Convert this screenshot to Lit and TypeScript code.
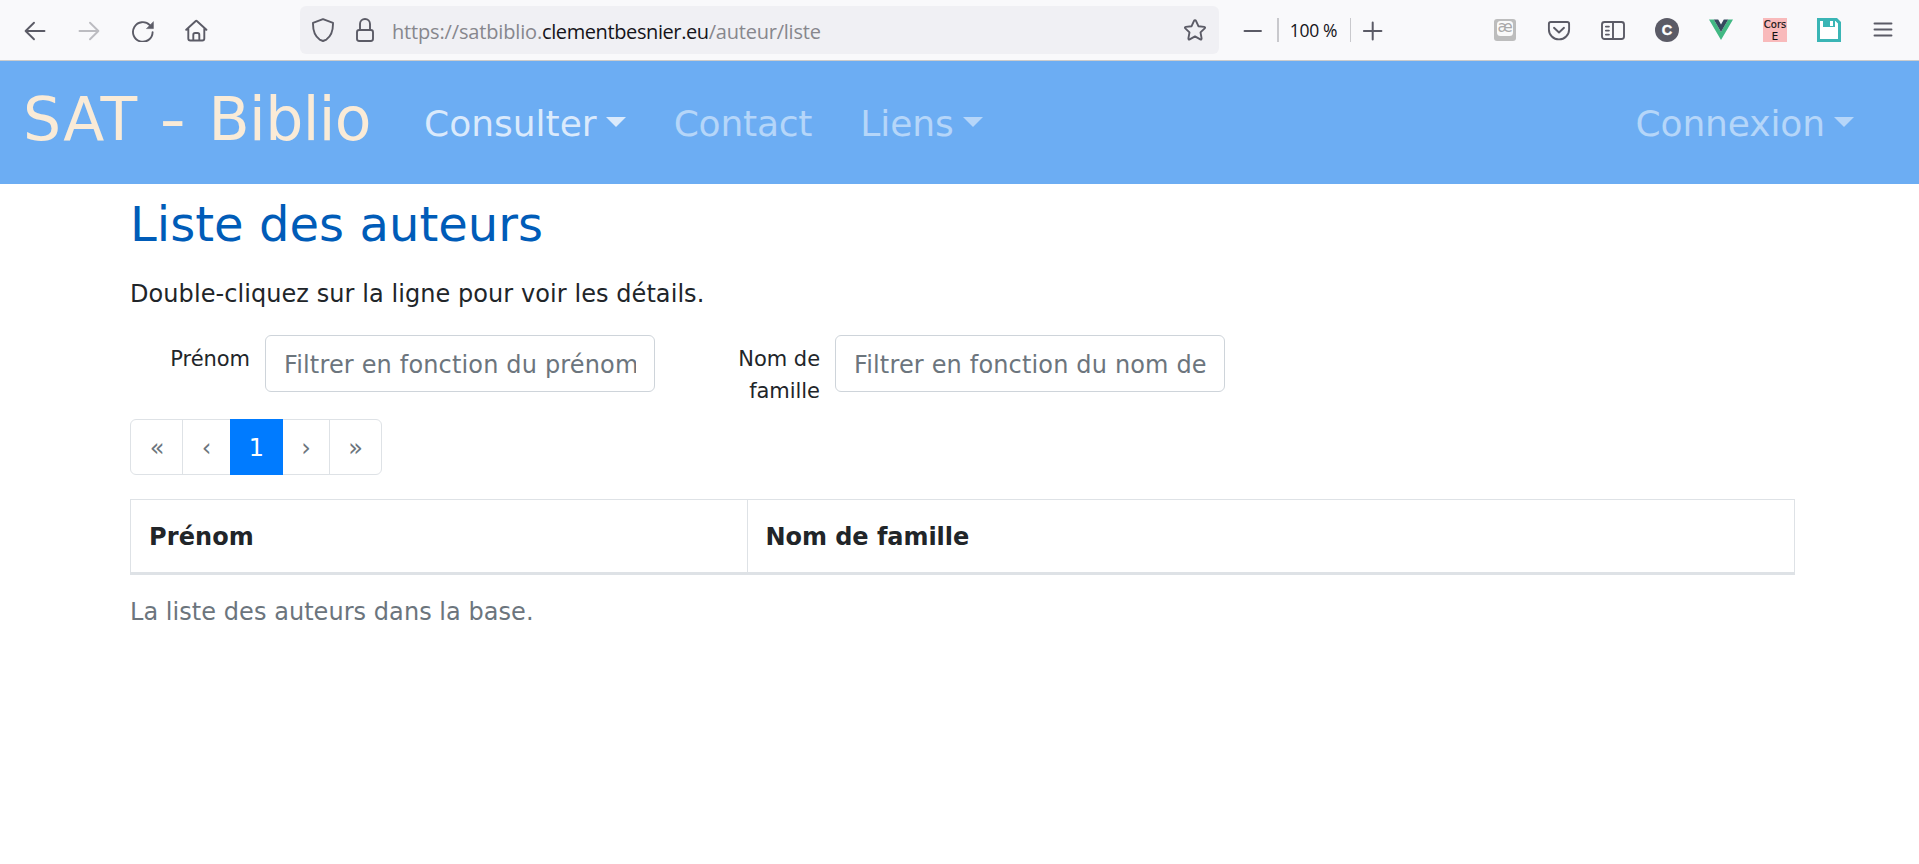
import { LitElement, html, css, svg } from "lit";
import { customElement, property } from "lit/decorators.js";
import { classMap } from "lit/directives/class-map.js";

const icon = (body: unknown, label: string) => html`
  <svg class="icon" viewBox="0 0 24 24" width="24" height="24" fill="none" stroke="#5b5b66"
    stroke-width="1.9" stroke-linecap="round" stroke-linejoin="round" aria-label=${label}>${body}</svg>`;

const icons = {
  back: svg`<path d="M21.5 13H2.6M11 4.7L2.6 13l8.4 8.3"/>`,
  forward: svg`<g stroke="#bcbcc1"><path d="M2.5 13h18.9M13 4.7l8.4 8.3L13 21.3"/></g>`,
  reload: svg`<path d="M21.6 14.2A9.8 9.8 0 1 1 18.8 7.1"/><path d="M22.4 4v6.6h-6.6z" fill="#5b5b66" stroke-width="0.6"/>`,
  home: svg`<path d="M1.2 11.8L10.500 3.200q.8-.7 1.600 0l9.300 8.600M3.300 10.300v10.200q0 2 2 2h12q2 0 2-2V10.300M8.300 22.300v-5.500q0-1.800 1.800-1.800h2.400q1.800 0 1.800 1.800v5.500"/>`,
  shield: svg`<path d="M12 1.100L22 4.900q.3 11.800-6.600 16.700L12 23l-3.400-1.400Q1.700 16.700 2 4.900z"/>`,
  lock: svg`<rect x="4" y="12" width="16" height="11" rx="2.200"/><path d="M7 12V6a5 5 0 0 1 10 0v6"/>`,
  star: svg`<path d="M12 2.200q.7 0 1 .7l2.400 5.300 5.800.7q1.500.3.5 1.500l-4.200 4 1.100 6q.1 1.500-1.300.9L12 18.400l-5.300 2.900q-1.400.6-1.300-.9l1.100-6-4.200-4q-1-1.200.5-1.500l5.800-.7L11 2.900q.3-.7 1-.7z"/>`,
  minus: svg`<path d="M3.500 13h16.500"/>`,
  plus: svg`<path d="M2.900 13h17.500M11.700 4.600v16.800" stroke-width="2"/>`,
  key: svg`<rect x="1" y="1" width="22" height="22" rx="3" fill="#bdbdbd" stroke="none"/>
    <rect x="4" y="3" width="16" height="15" rx="3.500" fill="#fafafa" stroke="none"/>
    <text x="12" y="13.500" text-anchor="middle" class="key-text">æ</text>`,
  pocket: svg`<path d="M3.800 4h16.400q1.900 0 1.900 1.900V11.500a10.100 9.900 0 0 1-20.200 0V5.900Q1.900 4 3.800 4zM7 9.800l5 4.700 5-4.700"/>`,
  sidebar: svg`<rect x="1" y="4" width="22" height="17" rx="2.500"/><path d="M12 4v17M4.900 8.600h3M4.900 12.600h3M4.900 16.600h3"/>`,
  letter: svg`<circle cx="12" cy="12" r="12" fill="#5b5b66" stroke="none"/>
    <text x="12" y="17.200" text-anchor="middle" class="letter-text">C</text>`,
  vue: svg`<g stroke="none"><path d="M0 1.500h4.800L12 14l7.200-12.500H24L12 22z" fill="#41b883"/>
    <path d="M4.800 1.500h4.400L12 6.400l2.800-4.900h4.400L12 14z" fill="#35495e"/></g>`,
  cors: svg`<path d="M0 0h24v24H0z" fill="#f9babb" stroke="none"/>
    <text x="12" y="9.700" text-anchor="middle" class="cors-text">Cors</text>
    <text x="12" y="21.700" text-anchor="middle" class="cors-text">E</text>`,
  disk: svg`<g stroke="none"><path d="M0 0h20l4 4v20H0z" fill="#3ab5b5"/><path d="M3 3h3v6h12V3h.500L21 5.500V21H3z" fill="#fff"/>
    <path d="M13 3h3v5h-3z" fill="#fff"/></g>`,
  menu: svg`<path d="M3.500 5.500h17M3.500 11.500h17M3.500 17.500h17"/>`,
};

@customElement("browser-bar")
class BrowserBar extends LitElement {
  static styles = css`
    :host { display: flex; align-items: center; box-sizing: border-box; height: 61px; background: #f9f9fb;
      border-bottom: 1px solid #cccccc; padding: 0 24px 0 23px; color: #15141a; }
    .icon { display: block; flex: none; }
    .group { display: flex; gap: 30px; }
    .address { display: flex; align-items: center; box-sizing: border-box; width: 919px; height: 48px; margin-left: 91px;
      padding: 0 12px 0 11px; border-radius: 6px; background: #f0f0f4; }
    .lock { margin-left: 18px; }
    .url { flex: 1; margin-left: 15px; font: 20px/28px "Open Sans", sans-serif; color: #87878d; white-space: nowrap;
      letter-spacing: -0.16px; padding-top: 3px; }
    .host { color: #15141a; letter-spacing: -0.4px; }
    .path { letter-spacing: -0.22px; }
    .zoom { display: flex; align-items: center; margin-left: 22px; }
    .rule { width: 1px; height: 24px; background: #c9c9cd; }
    .rule.wide { width: 2px; margin-left: 12px; }
    .level { width: 71px; text-align: center; font: 17.5px/26px "Open Sans", sans-serif; letter-spacing: -0.3px; text-indent: -2px;
      padding-bottom: 1px; }
    .zoom .rule + .icon { margin-left: 10px; }
    .tools { margin-left: auto; }
    .key-text { font: 15.5px "DejaVu Sans", sans-serif; fill: #a9a9a9; stroke: none; }
    .letter-text { font: bold 14.5px "Liberation Sans", sans-serif; fill: #fff; stroke: #fff; stroke-width: 0.4px; }
    .cors-text { font: 10px "DejaVu Sans", sans-serif; fill: #111; stroke: #111; stroke-width: 0.15px; }
  `;
  render() {
    return html`
      <div class="group">
        ${icon(icons.back, "Reculer")}${icon(icons.forward, "Avancer")}${icon(icons.reload, "Actualiser")}${icon(icons.home, "Accueil")}
      </div>
      <div class="address">
        ${icon(icons.shield, "Protection")}<div class="lock">${icon(icons.lock, "Sécurité")}</div>
        <div class="url">https://satbiblio.<span class="host">clementbesnier.eu</span><span class="path">/auteur/liste</span></div>
        ${icon(icons.star, "Marque-page")}
      </div>
      <div class="zoom">
        ${icon(icons.minus, "Réduire")}<div class="rule wide"></div>
        <div class="level">100 %</div>
        <div class="rule"></div>${icon(icons.plus, "Agrandir")}
      </div>
      <div class="group tools">
        ${icon(icons.key, "æ")}${icon(icons.pocket, "Pocket")}${icon(icons.sidebar, "Panneau")}${icon(icons.letter, "C")}
        ${icon(icons.vue, "Vue")}${icon(icons.cors, "CORS")}${icon(icons.disk, "Enregistrer")}${icon(icons.menu, "Menu")}
      </div>`;
  }
}

@customElement("site-nav")
class SiteNav extends LitElement {
  static styles = css`
    :host { display: flex; align-items: center; box-sizing: border-box; height: 123px; background: #6cadf3;
      padding: 0 65px 7px 23px; font: 36px/54px "DejaVu Sans", Verdana, sans-serif; }
    a { text-decoration: none; white-space: nowrap; }
    .brand { font-size: 60px; line-height: 90px; letter-spacing: 1px; color: #faebd7; width: 401px; }
    .dash { display: inline-block; margin: 0 4px 0 3.5px; transform: scaleX(1.22); }
    .name { letter-spacing: -0.6px; }
    .links { display: flex; flex: 1; gap: 48px; padding-top: 10px; }
    .link { display: flex; color: rgba(255, 255, 255, 0.5); letter-spacing: -0.1px; }
    .link.active { color: rgba(255, 255, 255, 0.75); letter-spacing: 0; }
    .link.tight { letter-spacing: -0.2px; }
    .caret { margin: 20px 0 0 9px; width: 0; height: 0; border: 10px solid transparent; border-top-color: currentColor; border-bottom: 0; }
    .end { margin-left: auto; }
  `;
  link(label: string, menu: boolean, extra: Record<string, boolean> = {}) {
    return html`<a class=${classMap({ link: true, ...extra })}>${label}${menu ? html`<span class="caret"></span>` : ""}</a>`;
  }
  render() {
    return html`<a class="brand">SAT <span class="dash">-</span> <span class="name">Biblio</span></a>
      <div class="links">
        ${this.link("Consulter", true, { active: true })}${this.link("Contact", false, { tight: true })}
        ${this.link("Liens", true)}${this.link("Connexion", true, { end: true })}
      </div>`;
  }
}

@customElement("filter-field")
class FilterField extends LitElement {
  @property() label = "";
  @property() hint = "";
  static styles = css`
    :host { display: flex; align-items: flex-start; width: 525px; }
    label { width: 120px; padding-top: 8px; text-align: right; font-size: 21px; line-height: 32px; letter-spacing: -0.05px; }
    input { box-sizing: border-box; width: 390px; height: 57px; margin: 0 0 0 15px; padding: 2px 18px 0; border: 1px solid #ced4da;
      border-radius: 6px; background: #fff; font: 24px/36px "DejaVu Sans", Verdana, sans-serif; letter-spacing: 0.16px; }
    input::placeholder { color: #6c757d; opacity: 1; }
  `;
  render() {
    return html`<label>${this.label}</label><input placeholder=${this.hint} />`;
  }
}

@customElement("app-root")
class AppRoot extends LitElement {
  static styles = css`
    :host { display: block; min-height: 864px; background: #fff; color: #212529; font: 24px/36px "DejaVu Sans", Verdana, sans-serif; }
    main { width: 1665px; margin-left: 130px; padding-top: 11px; }
    h1 { margin: 0 0 23px; font-size: 48px; line-height: 58px; font-weight: 400; color: #005cb8; letter-spacing: 0.05px; }
    p { margin: 0 0 23px; letter-spacing: 0.07px; }
    .filters { display: flex; gap: 45px; height: 84px; }
    .pages { display: flex; width: 252px; height: 56px; box-sizing: border-box; margin: 0 0 24px; padding: 0; list-style: none;
      border: 1px solid #dee2e6; border-radius: 6px; color: #6c757d; }
    .pages li { box-sizing: border-box; padding-top: 10px; text-align: center; }
    .pages .first { width: 51px; padding-left: 1px; }
    .pages .prev { width: 48px; border-left: 1px solid #dee2e6; }
    .pages .current { width: 53px; margin: -1px 0; padding-top: 11px; background: #007bff; color: #fff; }
    .pages .next { width: 46px; }
    .pages .last { width: 52px; border-left: 1px solid #dee2e6; }
    .head { display: grid; grid-template-columns: 616px 1fr; border: 1px solid #dee2e6; border-bottom-width: 3px; font-weight: 700; }
    .head div { padding: 19px 18px 17px; letter-spacing: 0.1px; }
    .head div + div { border-left: 1px solid #dee2e6; padding-left: 17.5px; letter-spacing: -0.05px; }
    .caption { margin: 19px 0 0; color: #6c757d; letter-spacing: 0.05px; }
  `;
  render() {
    return html`
      <browser-bar></browser-bar>
      <site-nav></site-nav>
      <main>
        <h1>Liste des auteurs</h1>
        <p>Double-cliquez sur la ligne pour voir les détails.</p>
        <div class="filters">
          <filter-field label="Prénom" hint="Filtrer en fonction du prénom"></filter-field>
          <filter-field label="Nom de famille" hint="Filtrer en fonction du nom de famille"></filter-field>
        </div>
        <ul class="pages">
          <li class="first">«</li><li class="prev">‹</li><li class="current">1</li><li class="next">›</li><li class="last">»</li>
        </ul>
        <div class="head"><div>Prénom</div><div>Nom de famille</div></div>
        <p class="caption">La liste des auteurs dans la base.</p>
      </main>`;
  }
}
